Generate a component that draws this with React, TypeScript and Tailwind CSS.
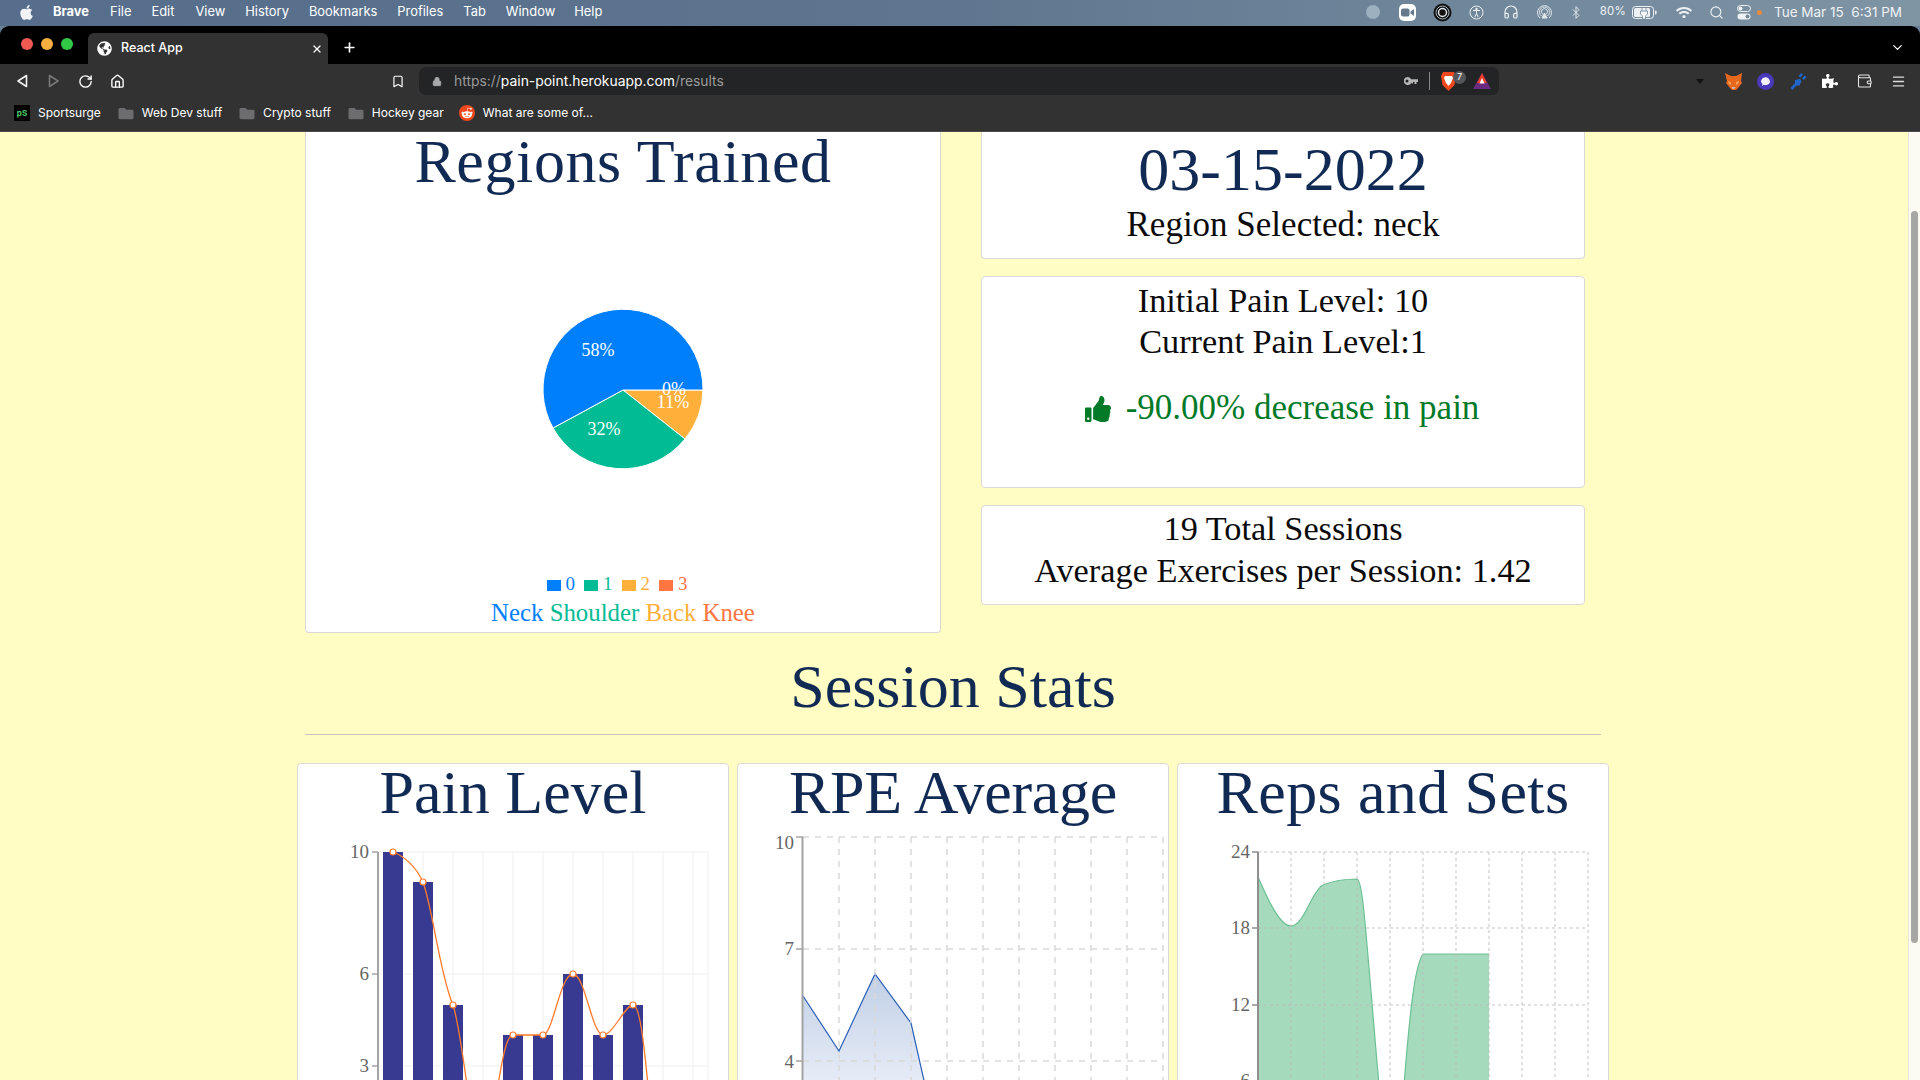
import React from "react";
import { FaApple, FaGlobeAmericas, FaThumbsUp, FaPuzzlePiece, FaRedditAlien, FaFolder, FaWifi } from "react-icons/fa";
import { Headphones, Bluetooth, Search, RotateCw, Home, Bookmark, Lock, ChevronDown, Plus, X, Menu, Wallet } from "lucide-react";

const serif = "[font-family:'Liberation_Serif',serif]";

function MenuBar() {
  const items: [string, string][] = [
    ["File", "ml-[21px]"], ["Edit", "ml-[20px]"], ["View", "ml-[21px]"], ["History", "ml-[20px]"],
    ["Bookmarks", "ml-[20px]"], ["Profiles", "ml-[20px]"], ["Tab", "ml-[20px]"], ["Window", "ml-[20px]"], ["Help", "ml-[19px]"],
  ];
  return (
    <div className="h-[26px] pb-[2px] shrink-0 flex items-center bg-[linear-gradient(90deg,#566d8b_0%,#5f7690_50%,#7f95a4_100%)] text-white text-[12.9px] font-['Inter',sans-serif]">
      <FaApple className="ml-[19px] w-[15px] h-[17px] text-[#f1f3f6]" />
      <span className="ml-[19px] font-bold">Brave</span>
      {items.map(([t, c]) => <span key={t} className={c}>{t}</span>)}
      <div className="ml-auto flex items-center h-full pr-[18px] text-[#eef2f5]">
        <span className="w-[14px] h-[14px] rounded-full bg-[#9db0c0]" />
        <span className="ml-[19px] w-[17px] h-[17px] rounded-[5px] bg-white flex items-center justify-center">
          <svg width="13" height="9" viewBox="0 0 13 9"><rect x="0" y="0.5" width="8.5" height="8" rx="2" fill="#65798c" /><path d="M9.5 3.5 13 1v7L9.5 5.5z" fill="#65798c" /></svg>
        </span>
        <svg className="ml-[17px]" width="19" height="19" viewBox="0 0 19 19"><circle cx="9.5" cy="9.5" r="9" fill="#111" /><circle cx="9.5" cy="9.5" r="6.5" fill="none" stroke="#9fb0bd" strokeWidth="1" /><circle cx="9.5" cy="9.5" r="4" fill="none" stroke="#dfe6ea" strokeWidth="1.5" /></svg>
        <svg className="ml-[17px]" width="15" height="15" viewBox="0 0 15 15" fill="none" stroke="#eef2f5" strokeWidth="1"><circle cx="7.5" cy="7.5" r="6.5" /><circle cx="7.5" cy="4" r="0.8" fill="#eef2f5" /><path d="M4 5.5h7M7.5 5.5v3M7.5 8.5 5.8 12M7.5 8.5 9.2 12" /></svg>
        <Headphones className="ml-[19px] w-[16px] h-[16px]" strokeWidth={1.8} />
        <svg className="ml-[17px]" width="17" height="17" viewBox="0 0 17 17" fill="none" stroke="#dfe6ea" strokeWidth="1"><path d="M4 14a7 7 0 1 1 9 0" /><path d="M5.5 12a5 5 0 1 1 6 0" /><path d="M7 10.3a3 3 0 1 1 3 0" /><path d="M8.5 9 6 14h5z" fill="#dfe6ea" /></svg>
        <Bluetooth className="ml-[16px] w-[14px] h-[15px]" strokeWidth={1.5} />
        <span className="ml-[17px] text-[11.5px] tracking-[0.2px]">80%</span>
        <svg className="ml-[6px]" width="25" height="13" viewBox="0 0 25 13"><rect x="0.5" y="0.5" width="21" height="12" rx="3" fill="none" stroke="#eef2f5" /><rect x="2" y="2" width="16" height="9" rx="1.5" fill="#eef2f5" /><path d="M10 1v4M14 1v4M8.5 5h7v3l-2 2v3h-3v-3l-2-2z" fill="#f6f8fa" stroke="#6f8597" strokeWidth="0.8" /><rect x="23" y="4.5" width="1.5" height="4" rx="0.7" fill="#eef2f5" /></svg>
        <FaWifi className="ml-[19px] w-[16px] h-[13px]" />
        <Search className="ml-[17px] w-[15px] h-[15px]" strokeWidth={1.8} />
        <svg className="ml-[13px]" width="14" height="15" viewBox="0 0 14 15"><rect x="0.5" y="0.5" width="13" height="6" rx="3" fill="none" stroke="#eef2f5" /><circle cx="3.5" cy="3.5" r="2" fill="#eef2f5" /><rect x="0.5" y="8.5" width="13" height="6" rx="3" fill="#eef2f5" /><circle cx="10.5" cy="11.5" r="2" fill="#738a9b" /></svg>
        <span className="ml-[6px] w-[5px] h-[5px] rounded-full bg-[#e98a3d]" />
        <span className="ml-[12px] text-[13.5px] whitespace-pre">Tue Mar 15  6:31 PM</span>
      </div>
    </div>
  );
}

function TabBar() {
  return (
    <div className="h-[38px] shrink-0 bg-black rounded-t-[9px] flex items-end text-white font-['Inter',sans-serif]">
      <div className="self-center flex gap-[8px] ml-[21px] -mt-[3px]">
        <span className="w-[12px] h-[12px] rounded-full bg-[#ee5a52]" />
        <span className="w-[12px] h-[12px] rounded-full bg-[#f5b040]" />
        <span className="w-[12px] h-[12px] rounded-full bg-[#33c748]" />
      </div>
      <div className="ml-[15px] w-[240px] h-[31px] rounded-t-[6px] bg-[#323232] flex items-center pl-[9px] pr-[5px] text-[12.5px] font-medium">
        <FaGlobeAmericas className="w-[15px] h-[15px]" />
        <span className="ml-[9px]">React App</span>
        <X className="ml-auto w-[12px] h-[12px]" strokeWidth={2.4} />
      </div>
      <Plus className="self-center ml-[14px] w-[15px] h-[15px] mt-[5px]" strokeWidth={2.6} />
      <ChevronDown className="self-center ml-auto mr-[15px] w-[15px] h-[15px] mt-[5px]" strokeWidth={2} />
    </div>
  );
}

function Toolbar() {
  return (
    <div className="h-[36px] pb-[2px] shrink-0 bg-[#323232] flex items-center text-white">
      <svg className="ml-[16px]" width="12" height="14" viewBox="0 0 12 14" fill="none" stroke="#f2f2f2" strokeWidth="1.6" strokeLinejoin="round"><path d="M10.5 1.5v11L2 7z" /></svg>
      <svg className="ml-[20px]" width="12" height="14" viewBox="0 0 12 14" fill="none" stroke="#777" strokeWidth="1.6" strokeLinejoin="round"><path d="M1.5 1.5v11L10 7z" /></svg>
      <RotateCw className="ml-[18px] w-[15px] h-[15px]" strokeWidth={2.2} />
      <Home className="ml-[17px] w-[15px] h-[15px]" strokeWidth={2.2} />
      <Bookmark className="ml-[266px] w-[14px] h-[15px]" strokeWidth={2} />
      <div className="ml-[14px] w-[1080px] h-[28px] rounded-[7px] bg-[#232425] flex items-center pl-[13px] font-['Inter',sans-serif]">
        <Lock className="w-[10px] h-[11px] text-[#a9a9a9]" fill="#a9a9a9" strokeWidth={2} />
        <span className="ml-[12px] text-[#9a9a9a] text-[13.9px]">https://<span className="text-white">pain-point.herokuapp.com</span>/results</span>
        <div className="ml-auto flex items-center pr-[8px]">
          <svg width="14" height="8" viewBox="0 0 14 8" fill="#b5b5b5"><path fillRule="evenodd" d="M3.500 0a4 4 0 0 1 3.600 2.300H14V5h-1.500v2h-2V5H9v1.500H7.500V5.500A4 4 0 1 1 3.500 0zM3 2.500a1.500 1.500 0 1 0 0 3 1.500 1.500 0 0 0 0-3z" /></svg>
          <span className="ml-[11px] w-px h-[18px] bg-[#8a8a8a]" />
          <svg className="ml-[11px]" width="15" height="20" viewBox="0 0 15 20"><path d="M2 1h11l2 4-1.500 9L7.500 20 1.500 14 0 5z" fill="#f0481c" /><path d="M4 5h7l1 2-2 5-2.500 3L5 12 3 7z" fill="#fff" /></svg>
          <span className="-ml-[3px] -mt-[8px] w-[13px] h-[13px] rounded-full bg-[#55565a] text-[9px] flex items-center justify-center">7</span>
          <svg className="ml-[7px]" width="18" height="16" viewBox="0 0 18 16"><path d="M9 0 18 16H0z" fill="#6a2a80" /><path d="M9 0 14 10H4z" fill="#ea3e27" /><path d="M9 5 11.500 10.500H6.500z" fill="#fff" /></svg>
        </div>
      </div>
      <svg className="ml-[197px]" width="8" height="5" viewBox="0 0 8 5"><path d="M0 0h8L4 5z" fill="#111" /></svg>
      <svg className="ml-[21px]" width="17" height="17" viewBox="0 0 17 17"><path d="M0 0 6 3h5l6-3-1 8 1 2-4 5-2 2H7l-2-2-4-5 1-2z" fill="#e8671f" /><path d="M3 8l3 1v3l-2-1zM14 8l-3 1v3l2-1z" fill="#f6a15b" /><path d="M6.500 14h4L9.500 16h-2z" fill="#cbb8a8" /></svg>
      <svg className="ml-[15px]" width="17" height="17" viewBox="0 0 17 17"><circle cx="8.500" cy="8.500" r="8.500" fill="#4a3ab9" /><path d="M4 9a4.500 4.500 0 0 1 9-.5c0 2-2 3.500-4 3.500H6.500L5 13l.5-2z" fill="#f4f1ff" /></svg>
      <svg className="ml-[16px]" width="17" height="17" viewBox="0 0 17 17" fill="#2265c9"><path d="M11 0l2 1.500-2.500 3-2-1.500zM14.500 2.500 16.500 4 14 7l-2-1.500zM5 7l5-1 1.500 2-2 4.500-5 .5z" /><path d="M4 11l2 2-3.500 4-2-2z" /></svg>
      <FaPuzzlePiece className="ml-[15px] w-[16px] h-[16px]" />
      <Wallet className="ml-[18px] w-[17px] h-[16px] text-[#e6e6e6]" strokeWidth={1.6} />
      <Menu className="ml-[18px] w-[15px] h-[15px] text-[#dcdcdc]" strokeWidth={2.2} />
    </div>
  );
}

function Bookmarks() {
  const Folder = () => <FaFolder className="w-[16px] h-[15px] text-[#6d6d70]" />;
  return (
    <div className="h-[32px] pb-[5px] shrink-0 bg-[#323232] flex items-center text-white text-[12px] font-['Inter',sans-serif] border-b border-[#4a4a4a]">
      <span className="ml-[14px] w-[16px] h-[16px] bg-black flex items-center justify-center text-[8px] font-bold text-[#4ed06a]">pS</span>
      <span className="ml-[8px]">Sportsurge</span>
      <span className="ml-[17px]"><Folder /></span>
      <span className="ml-[8px]">Web Dev stuff</span>
      <span className="ml-[17px]"><Folder /></span>
      <span className="ml-[8px]">Crypto stuff</span>
      <span className="ml-[17px]"><Folder /></span>
      <span className="ml-[8px]">Hockey gear</span>
      <span className="ml-[15px] w-[16px] h-[16px] rounded-full bg-[#f0481c] flex items-center justify-center"><FaRedditAlien className="w-[12px] h-[12px]" /></span>
      <span className="ml-[8px]">What are some of...</span>
    </div>
  );
}

function Pie() {
  return (
    <svg className="block" width="636" height="350" viewBox="305 220 636 350">
      <path d="M623 388L703 388A80 80 0 0 1 685 437Z" fill="#ffb03b" stroke="#fff" strokeWidth="1" />
      <path d="M623 388L685 437A80 80 0 0 1 553 426Z" fill="#00bb94" stroke="#fff" strokeWidth="1" />
      <path d="M623 388L553 426A80 80 0 1 1 703 388Z" fill="#007ffd" stroke="#fff" strokeWidth="1" />
      <g fill="#fff" fontSize="18" fontFamily="'Liberation Serif',serif" textAnchor="middle">
        <text x="598" y="354">58%</text>
        <text x="604" y="433">32%</text>
        <text x="674" y="393">0%</text>
        <text x="673" y="406">11%</text>
      </g>
    </svg>
  );
}

function LeftCard() {
  const legend: [string, string, string][] = [["0", "bg-[#007ffd]", "text-[#007ffd]"], ["1", "bg-[#00bb94]", "text-[#00bb94]"], ["2", "bg-[#ffb03b]", "text-[#ffb03b]"], ["3", "bg-[#ff7642]", "text-[#ff7642]"]];
  return (
    <div className="w-[636px] h-[501px] bg-white rounded-b-[4px] border border-t-0 border-[#d9d9d5] text-center flex flex-col">
      <h2 className="text-[62px] tracking-[0.6px] leading-[56px] mt-[1px] text-[#102a54]">Regions Trained</h2>
      <div className="-mx-px mt-[33px]"><Pie /></div>
      <div className="flex justify-center items-center gap-[9px] pr-[12px] text-[19px] leading-[22px] mt-[1px]">
        {legend.map(([t, bg, fg]) => (
          <span key={t} className={`flex items-center gap-[5px] ${fg}`}><span className={`w-[14px] h-[11px] mt-[2px] ${bg}`} />{t}</span>
        ))}
      </div>
      <div className="text-[24.8px] leading-[28px] mt-[4px] whitespace-pre">
        <span className="text-[#007ffd]">Neck</span> <span className="text-[#00bb94]">Shoulder</span> <span className="text-[#ffb03b]">Back</span> <span className="text-[#ff7642]">Knee</span>
      </div>
    </div>
  );
}

function RightColumn() {
  const card = "bg-white rounded-[4px] border border-[#d9d9d5] text-center";
  return (
    <div className="w-[604px] flex flex-col gap-[17px] text-[34.3px] leading-[42px] text-[#0b0b0b]">
      <div className={`${card} h-[127px] rounded-t-none border-t-0 pt-[1px]`}>
        <div className="text-[62px] leading-[72px] text-[#102a54]">03-15-2022</div>
        <div className="mt-[-1px] text-[35px]">Region Selected: neck</div>
      </div>
      <div className={`${card} h-[212px] pt-[2px]`}>
        <div>Initial Pain Level: 10</div>
        <div className="-mt-px">Current Pain Level:1</div>
        <div className="mt-[25px] flex justify-center items-center text-[#027a28] text-[35px]">
          <FaThumbsUp className="w-[26px] h-[26px] mt-[2px] mr-[15px] -ml-[2px]" />
          <span>-90.00% decrease in pain</span>
        </div>
      </div>
      <div className={`${card} h-[100px] pt-[1px]`}>
        <div>19 Total Sessions</div>
        <div>Average Exercises per Session: 1.42</div>
      </div>
    </div>
  );
}

const axisLabel = { fill: "#666", fontSize: 19, fontFamily: "'Liberation Serif',serif", textAnchor: "end" as const };

function PainChart() {
  const v = [423, 453, 483, 513, 543, 573, 603, 633, 663, 693, 708];
  const bars: [number, number][] = [[393, 852], [423, 882], [453, 1005], [513, 1035], [543, 1035], [573, 974], [603, 1035], [633, 1005]];
  return (
    <svg className="block" width="430" height="240" viewBox="298 840 430 240">
      {v.map((x) => <line key={x} x1={x} x2={x} y1="852" y2="1080" stroke="#f4f4f4" strokeWidth="1.5" />)}
      {[852, 974, 1066].map((y) => <line key={y} x1="378" x2="708" y1={y} y2={y} stroke="#f4f4f4" strokeWidth="1.5" />)}
      {bars.map(([x, y]) => <rect key={x} x={x - 10} y={y} width="20" height={1090 - y} fill="#373a90" />)}
      <path d="M378 852V1080" stroke="#a3a3a3" strokeWidth="2" />
      {[852, 974, 1066].map((y) => <line key={y} x1="372" x2="378" y1={y} y2={y} stroke="#a3a3a3" strokeWidth="1.5" />)}
      <text x="369" y="858" {...axisLabel}>10</text>
      <text x="369" y="980" {...axisLabel}>6</text>
      <text x="369" y="1072" {...axisLabel}>3</text>
      <path d="M393 852C403 856 415 865 423 882C433 910 440 975 453 1005C458 1020 462 1050 467 1085M498 1085C503 1055 507 1035 513 1035L543 1035C553 1035 560 974 573 974C585 974 592 1035 603 1035C613 1035 625 1005 633 1005C640 1005 644 1045 648 1085" fill="none" stroke="#ff7a2b" strokeWidth="1.3" />
      {bars.map(([x, y]) => <circle key={x} cx={x} cy={y} r="3" fill="#fff" stroke="#ff7a2b" strokeWidth="1.2" />)}
    </svg>
  );
}

function RpeChart() {
  const v = [839, 875, 911, 947, 983, 1019, 1055, 1091, 1127, 1163];
  return (
    <svg className="block" width="430" height="240" viewBox="738 840 430 240" overflow="visible">
      <defs>
        <linearGradient id="rpe" x1="0" x2="0" y1="0" y2="1"><stop offset="0" stopColor="#c0cfe6" /><stop offset="1" stopColor="#e8edf7" /></linearGradient>
      </defs>
      <path d="M803 996L839 1051L875 974L911 1023L925 1085L803 1085Z" fill="url(#rpe)" />
      <path d="M803 996L839 1051L875 974L911 1023L925 1085" fill="none" stroke="#2a5fb8" strokeWidth="1.2" />
      {v.map((x) => <line key={x} x1={x} x2={x} y1="837" y2="1080" stroke="#d9d9d9" strokeWidth="1.5" strokeDasharray="6 6" />)}
      {[837, 949, 1061].map((y) => <line key={y} x1="803" x2="1163" y1={y} y2={y} stroke="#d9d9d9" strokeWidth="1.5" strokeDasharray="6 6" />)}
      <path d="M802.500 837V1080" stroke="#a3a3a3" strokeWidth="2" />
      {[837, 949, 1061].map((y) => <line key={y} x1="796" x2="803" y1={y} y2={y} stroke="#a3a3a3" strokeWidth="1.5" />)}
      <text x="794" y="849" {...axisLabel}>10</text>
      <text x="794" y="955" {...axisLabel}>7</text>
      <text x="794" y="1068" {...axisLabel}>4</text>
    </svg>
  );
}

function RepsChart() {
  const v = [1291, 1324, 1357, 1390, 1423, 1456, 1489, 1522, 1555, 1588];
  return (
    <svg className="block" width="430" height="240" viewBox="1178 840 430 240">
      <path d="M1258 877C1268 900 1280 926 1291 926C1304 926 1312 890 1323 885C1335 880 1345 879 1357 879C1363 880 1365 925 1379 1085L1404 1085C1410 1010 1415 965 1423 954L1489 954L1489 1085L1258 1085Z" fill="#a5dabc" />
      <path d="M1258 877C1268 900 1280 926 1291 926C1304 926 1312 890 1323 885C1335 880 1345 879 1357 879C1363 880 1365 925 1379 1085M1404 1085C1410 1010 1415 965 1423 954L1489 954" fill="none" stroke="#6cc094" strokeWidth="1.2" />
      {v.map((x) => <line key={x} x1={x} x2={x} y1="852" y2="1080" stroke="#bdbdbd" strokeOpacity="0.6" strokeWidth="1.5" strokeDasharray="3 3" />)}
      {[852, 928, 1005].map((y) => <line key={y} x1="1258" x2="1588" y1={y} y2={y} stroke="#bdbdbd" strokeOpacity="0.6" strokeWidth="1.5" strokeDasharray="3 3" />)}
      <path d="M1258 852V1080" stroke="#8e8e8e" strokeWidth="2" />
      {[852, 928, 1005].map((y) => <line key={y} x1="1252" x2="1258" y1={y} y2={y} stroke="#8e8e8e" strokeWidth="1.5" />)}
      <text x="1250" y="858" {...axisLabel}>24</text>
      <text x="1250" y="934" {...axisLabel}>18</text>
      <text x="1250" y="1011" {...axisLabel}>12</text>
      <text x="1250" y="1087" {...axisLabel}>6</text>
    </svg>
  );
}

function StatCard({ title, tracking, children }: { title: string; tracking: string; children: React.ReactNode }) {
  return (
    <div className="w-[432px] h-[340px] bg-white rounded-t-[4px] border border-[#d9d9d5] text-center">
      <h3 className={`h-[76px] text-[62px] leading-[56px] text-[#102a54] ${tracking}`}>{title}</h3>
      {children}
    </div>
  );
}

export default function App() {
  return (
    <div className={`w-[1920px] h-[1080px] overflow-hidden flex flex-col bg-[#6a8099] ${serif}`}>
      <MenuBar />
      <TabBar />
      <Toolbar />
      <Bookmarks />
      <div className="flex-1 min-h-0 flex bg-[#fffdc3] overflow-hidden">
        <main className="flex-1 min-w-0 pl-[297px]">
          <div className="flex gap-[40px] pl-[8px]">
            <LeftCard />
            <RightColumn />
          </div>
          <h1 className="w-[1312px] text-center text-[62px] leading-[72px] mt-[17px] text-[#102a54]">Session Stats</h1>
          <hr className="ml-[8px] w-[1296px] mt-[12px] border-[#c6c6bb]" />
          <div className="flex gap-[8px] mt-[28px]">
            <StatCard title="Pain Level" tracking="tracking-[0px]"><PainChart /></StatCard>
            <StatCard title="RPE Average" tracking="tracking-[-0.3px]"><RpeChart /></StatCard>
            <StatCard title="Reps and Sets" tracking="tracking-[0.4px]"><RepsChart /></StatCard>
          </div>
        </main>
        <div className="w-[12px] shrink-0 bg-[#fbfaf3] border-l border-[#e8e7dc] pt-[79px] flex justify-center">
          <div className="w-[7px] h-[732px] rounded-full bg-[#a6a6a2]" />
        </div>
      </div>
    </div>
  );
}
